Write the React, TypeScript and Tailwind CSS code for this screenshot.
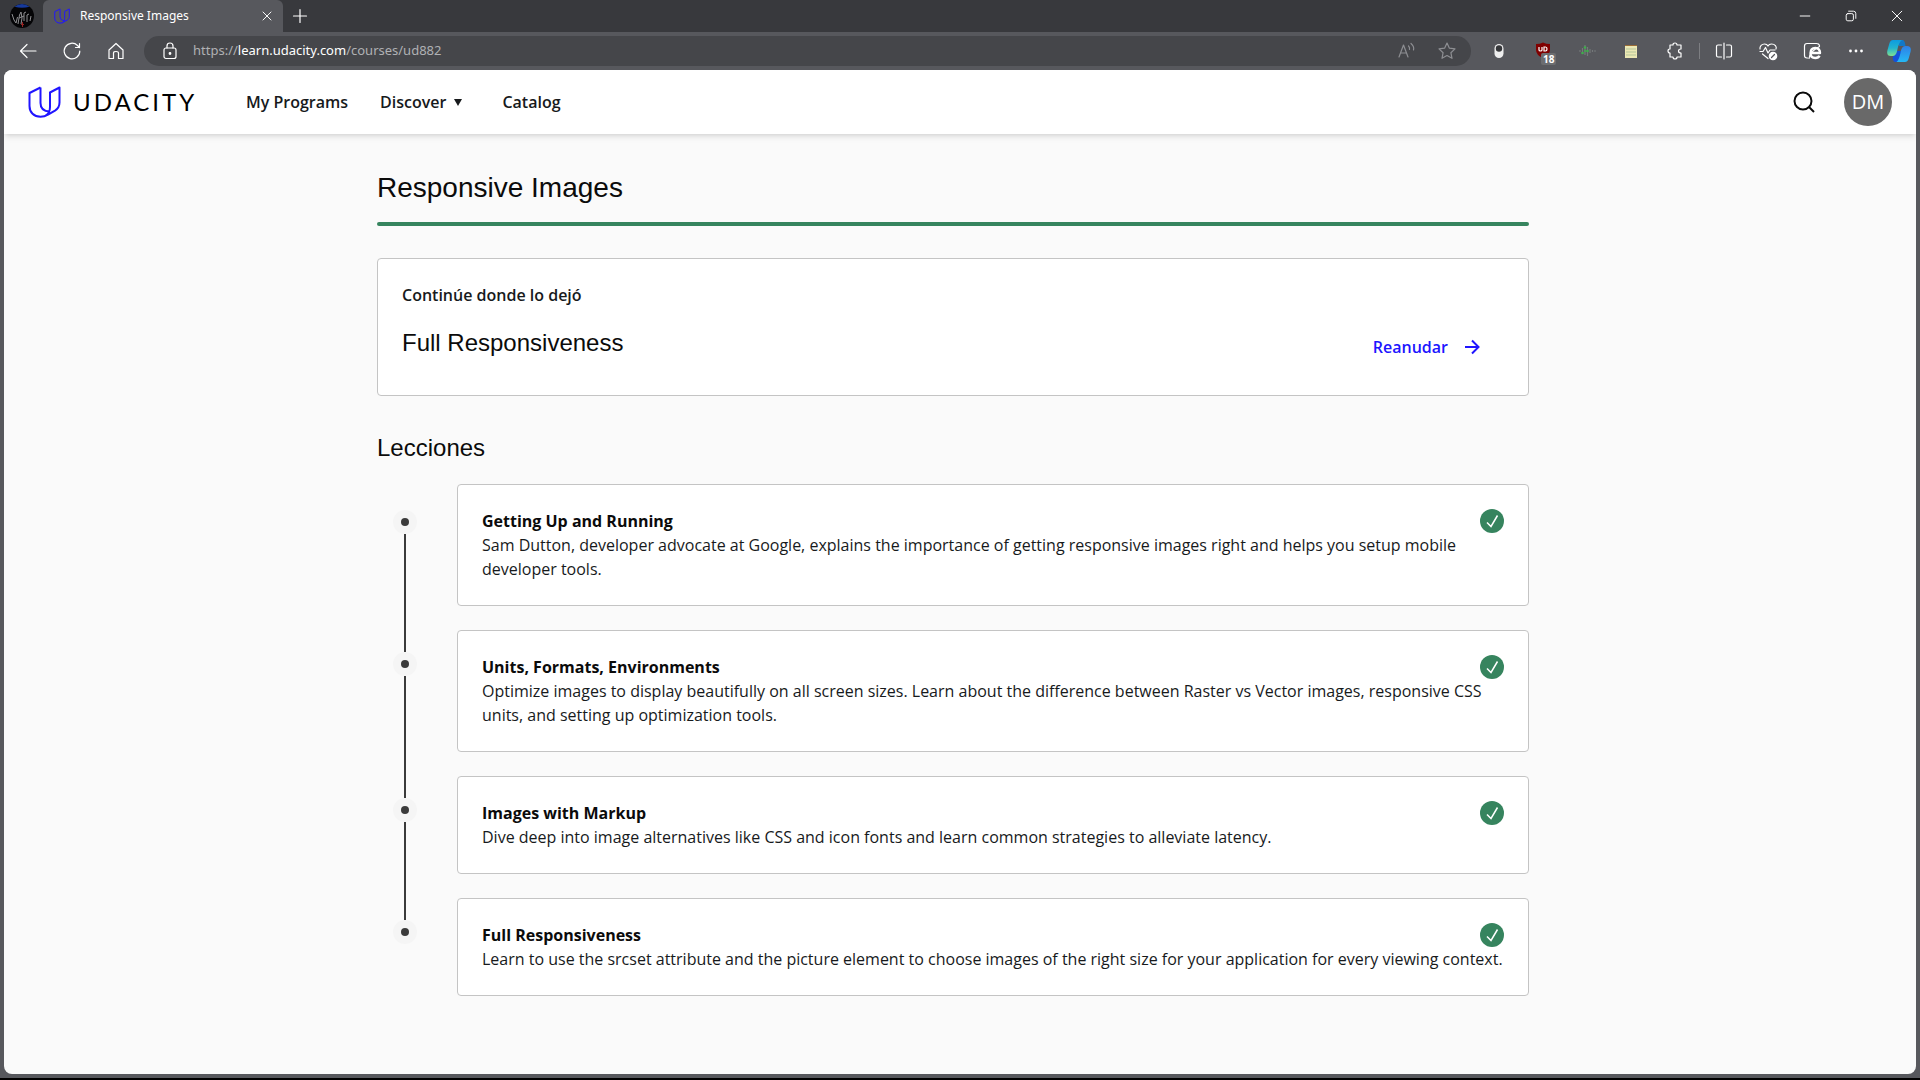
import React from "react";

const lessons = [
  {
    title: "Getting Up and Running",
    text: "Sam Dutton, developer advocate at Google, explains the importance of getting responsive images right and helps you setup mobile developer tools.",
  },
  {
    title: "Units, Formats, Environments",
    text: "Optimize images to display beautifully on all screen sizes. Learn about the difference between Raster vs Vector images, responsive CSS units, and setting up optimization tools.",
  },
  {
    title: "Images with Markup",
    text: "Dive deep into image alternatives like CSS and icon fonts and learn common strategies to alleviate latency.",
  },
  {
    title: "Full Responsiveness",
    text: "Learn to use the srcset attribute and the picture element to choose images of the right size for your application for every viewing context.",
  },
];

function Mark({ className }: { className: string }) {
  return (
    <svg viewBox="0 0 33 32" className={className} fill="none" stroke="#2015ff" strokeWidth="2" strokeLinejoin="round" aria-hidden="true">
      <path d="M12.500 1.500 L1.500 7 V20 C1.500 26.500 6 30.700 12.500 30.700 C15.500 30.700 18 29.800 20 28.600 L27 24.600 C30 22.700 31.500 20 31.500 16.500 V1.500 L22 6.500 V21 C22 25 20.500 28 17.500 29.700" />
      <path d="M12.500 1.500 V17 C12.500 22 15.500 25.300 21.500 25.600" />
    </svg>
  );
}

function IconButton({ label, className, children }: { label: string; className: string; children: React.ReactNode }) {
  return (
    <button type="button" aria-label={label} className={`flex h-7 shrink-0 items-center justify-center ${className}`}>
      {children}
    </button>
  );
}

function Line({ children, className = "size-5" }: { children: React.ReactNode; className?: string }) {
  return (
    <svg viewBox="0 0 20 20" className={className} fill="none" stroke="currentColor" strokeWidth="1.2" strokeLinecap="round" strokeLinejoin="round" aria-hidden="true">
      {children}
    </svg>
  );
}

function TabBar() {
  return (
    <div className="flex h-8 items-stretch bg-[#38393d] text-white">
      <button type="button" aria-label="Profile" className="flex w-[43px] items-center justify-center">
        <svg viewBox="0 0 24 24" className="size-6" aria-hidden="true">
          <circle cx="12" cy="12" r="12" fill="#050507" />
          <path d="M4.500 2.700 A12 12 0 0 1 19.500 2.700 Q12 5 4.500 2.700 Z" fill="#173a9c" />
          <path d="M2 10 L4 16 L6 19 L7.500 13 M8 20 L9.500 11 L11 8 L12 14 L11 20 M14 17 V9 L16 8 M17 18 V11 L19 10 M20 17 L21 12 M9 14 L14 12" stroke="#8f8f92" strokeWidth="1" fill="none" />
          <path d="M12.500 18 V23 M11 20.500 H14" stroke="#9a2424" strokeWidth="1" />
        </svg>
      </button>
      <div className="flex w-60 items-center rounded-t-md bg-[#57585d] pr-2 pl-[11px]">
        <Mark className="size-4" />
        <span className="ml-2.5 flex-1 font-['Noto_Sans',sans-serif] text-[12px]">Responsive Images</span>
        <IconButton label="Close tab" className="w-4">
          <Line className="size-4"><path d="M5 5 L15 15 M15 5 L5 15" /></Line>
        </IconButton>
      </div>
      <IconButton label="New tab" className="mt-0.5 w-[34px]">
        <Line className="size-5"><path d="M10 3.500 V16.500 M3.500 10 H16.500" /></Line>
      </IconButton>
      <div className="ml-auto flex items-center">
        <IconButton label="Minimize" className="w-[46px]"><Line className="size-4"><path d="M4 10 H16" /></Line></IconButton>
        <IconButton label="Restore" className="w-[46px]">
          <Line className="size-4"><rect x="4" y="7" width="9" height="9" rx="2" /><path d="M7 4 H13 Q16 4 16 7 V13" /></Line>
        </IconButton>
        <IconButton label="Close" className="w-[46px]"><Line className="size-4"><path d="M4 4 L16 16 M16 4 L4 16" /></Line></IconButton>
      </div>
    </div>
  );
}

function ToolBar() {
  return (
    <div className="flex h-[38px] items-center text-white">
      <IconButton label="Back" className="ml-[5px] w-[45px]"><Line><path d="M18 10 H2.500 M9 3.500 L2.500 10 L9 16.500" /></Line></IconButton>
      <IconButton label="Refresh" className="w-[44px]"><Line><path d="M17.800 10 A7.800 7.800 0 1 1 15.500 4.500 L17.500 6.500 M17.500 2.500 V6.500 H13.500" /></Line></IconButton>
      <IconButton label="Home" className="w-[44px]"><Line><path d="M3 9 L10 2.500 L17 9 V17.500 H12.500 V12 Q12.500 10.500 10 10.500 Q7.500 10.500 7.500 12 V17.500 H3 Z" /></Line></IconButton>
      <div className="ml-1.5 flex h-[30px] flex-1 items-center rounded-full bg-[#45464a] pr-1 pl-4">
        <Line><rect x="4" y="7" width="12" height="10.500" rx="2" /><path d="M7 7 V5 Q7 2 10 2 Q13 2 13 5 V7" /><circle cx="10" cy="12.500" r="0.800" fill="currentColor" /></Line>
        <a href="https://learn.udacity.com/courses/ud882" className="ml-[13px] flex-1 font-['Noto_Sans',sans-serif] text-[13px] text-[#b0b1b4]">
          https://<span className="text-white">learn.udacity.com</span>/courses/ud882
        </a>
        <IconButton label="Read aloud" className="w-10 text-[#8d8e92]"><Line><path d="M2 16 L6.500 4 L11 16 M3.500 12 H9.500 M11.500 5 Q13 6.500 12.500 8.500 M14 2.500 Q17.500 5.500 16.500 9" /></Line></IconButton>
        <IconButton label="Favorite" className="w-10 text-[#8d8e92]"><Line><path d="M10 2 L12.400 7.200 L18 7.900 L13.900 11.700 L15 17.300 L10 14.500 L5 17.300 L6.100 11.700 L2 7.900 L7.600 7.200 Z" /></Line></IconButton>
      </div>
      <IconButton label="Toggle extension" className="ml-1.5 w-[44px]">
        <svg viewBox="0 0 20 20" className="size-5" aria-hidden="true"><rect x="5.500" y="3" width="9" height="14" rx="4.500" fill="#eee" /><circle cx="10" cy="7.500" r="3.200" fill="#37383b" /></svg>
      </IconButton>
      <IconButton label="Ad blocker" className="relative w-[44px]">
        <svg viewBox="0 0 20 20" className="size-5" aria-hidden="true"><path d="M10 1.500 Q13 3 17 3 V9 Q17 14 10 17 Q3 14 3 9 V3 Q7 3 10 1.500" fill="#800000" /><path d="M6 6 V9 Q6 10 7.500 10 Q9 10 9 9 V6 M11 10 V6 H12.500 Q14 6 14 8 Q14 10 12.500 10 Z" fill="none" stroke="#fff" strokeWidth="1.200" /></svg>
        <span className="absolute top-4 left-5 rounded-xs bg-[#6c6d70] px-0.5 font-['Noto_Sans',sans-serif] text-[10px] leading-3 font-bold">18</span>
      </IconButton>
      <IconButton label="Audio extension" className="w-[44px]">
        <svg viewBox="0 0 20 20" className="size-5" fill="none" strokeWidth="1.200" aria-hidden="true"><path d="M3 9 V11 M5.500 7 V13 M8 4 V14 M10.500 6 V15 M13 8 V12 M15.500 9 V11 M17 10 H19" stroke="#74787a" /><g fill="#3fae4c"><circle cx="5.500" cy="12" r="1.300" /><circle cx="8" cy="6.500" r="1.300" /><circle cx="10.500" cy="10" r="1.300" /><circle cx="8" cy="10" r="1" /></g></svg>
      </IconButton>
      <IconButton label="Notes" className="w-[44px]">
        <svg viewBox="0 0 20 20" className="size-5" aria-hidden="true"><rect x="4" y="4" width="12" height="13" fill="#ece8b4" /><path d="M4 4.500 H16" stroke="#9b6c38" /><path d="M5 8 H15 M5 11 H15 M5 14 H15" stroke="#b4c59a" /></svg>
      </IconButton>
      <IconButton label="Extensions" className="w-[44px]"><Line><path d="M5 4 H8 Q8 2 10 2 Q12 2 12 4 H16 V8 Q13.500 8 13.500 10 Q13.500 12 16 12 V16 H12 Q12 18 10 18 Q8 18 8 16 H5 V12 Q3 12 3 10 Q3 8 5 8 Z" /></Line></IconButton>
      <span className="mx-0.5 h-4 w-px bg-[#7d7e82]" />
      <IconButton label="Split screen" className="w-[44px]"><Line><path d="M7.500 4 H4 Q2.500 4 2.500 5.500 V14.500 Q2.500 16 4 16 H7.500 M12.500 4 H16 Q17.500 4 17.500 5.500 V14.500 Q17.500 16 16 16 H12.500 M10 2 V18" /></Line></IconButton>
      <IconButton label="Browser essentials" className="w-[44px]">
        <Line><path d="M2 8 C1.500 5 4 3 6.500 3 Q9 3 10 5 Q11 3 13.500 3 C17 3 19 5.500 18 8 M2 10.500 H5 L7.500 6.500 L10 12 L12 9 H17 M4.500 13 L10 17.500" /><circle cx="15" cy="15" r="3.700" fill="#fff" /><path d="M13.500 16.500 L16.500 13.500" stroke="#57585d" /></Line>
      </IconButton>
      <IconButton label="Internet Explorer mode" className="w-[44px]">
        <Line><path d="M5.500 17 H5 Q2.500 17 2.500 14.500 V5 Q2.500 2.500 5 2.500 H14.500 Q17 2.500 17.500 4.500" /><path d="M8.500 12 H18 Q18 7 13.300 7 Q8.500 7 8.500 12.300 Q8.500 17 13.300 17 Q16.500 17 17.500 14.800" strokeWidth="2.400" strokeLinecap="butt" /><path d="M7 17.500 Q7.500 11 17.500 5.500" /></Line>
      </IconButton>
      <IconButton label="More" className="w-[44px]">
        <svg viewBox="0 0 20 20" className="size-5" fill="currentColor" aria-hidden="true"><circle cx="4.500" cy="10" r="1.400" /><circle cx="10" cy="10" r="1.400" /><circle cx="15.500" cy="10" r="1.400" /></svg>
      </IconButton>
      <IconButton label="Copilot" className="w-[42px]">
        <svg viewBox="0 0 24 24" className="size-6" aria-hidden="true">
          <defs>
            <linearGradient id="cl" x1="0" y1="0" x2="0" y2="1"><stop offset="0" stopColor="#0d9be0" /><stop offset="0.5" stopColor="#22b3cf" /><stop offset="1" stopColor="#7fe08f" /></linearGradient>
            <linearGradient id="cr" x1="0" y1="0" x2="0" y2="1"><stop offset="0" stopColor="#2f7fe6" /><stop offset="1" stopColor="#25b9f5" /></linearGradient>
          </defs>
          <path d="M6 17 Q5 22 8 23 H13 L16 12 H8 Z" fill="#1450d8" />
          <path d="M11 1 H16 Q18 2 18.500 7 H12 Z" fill="#1178c8" />
          <path d="M18 23 H9.500 Q12 21 13.500 14 Q14.500 7 18 7 H20 Q25 7 23.500 13 L21.500 20 Q20.500 23 18 23" fill="url(#cr)" />
          <path d="M6 1 H15 Q12 3 10.500 10 Q9.500 17 6 17 H4 Q-1 17 0.500 11 L2.500 4 Q3.500 1 6 1" fill="url(#cl)" />
        </svg>
      </IconButton>
    </div>
  );
}

function SiteHeader() {
  return (
    <header className="z-10 flex h-16 shrink-0 items-center bg-white px-6 font-semibold text-[#171a1c] shadow-md">
      <a href="#home" aria-label="Udacity" className="flex w-[170px] items-center text-black">
        <Mark className="h-8 w-[33px]" />
        <span className="ml-3 font-[Lato,sans-serif] text-[24px] leading-8 font-normal tracking-[3px]">UDACITY</span>
      </a>
      <nav className="ml-12 flex items-center gap-8">
        <a href="#programs">My Programs</a>
        <button type="button" className="mr-2 flex items-center gap-2">
          Discover
          <svg viewBox="0 0 8 7" className="h-[7px] w-2" aria-hidden="true"><path d="M0 0 H8 L4 7 Z" fill="currentColor" /></svg>
        </button>
        <a href="#catalog">Catalog</a>
      </nav>
      <button type="button" aria-label="Search" className="mr-6 ml-auto flex size-8 items-center justify-center">
        <svg viewBox="0 0 24 24" className="size-6" fill="none" stroke="#0b0b0b" strokeWidth="2" aria-hidden="true"><circle cx="11" cy="11" r="8.500" /><path d="M17 17 L22 22" /></svg>
      </button>
      <button type="button" className="flex size-12 items-center justify-center rounded-full bg-[#696969] text-[20px] font-medium text-white">DM</button>
    </header>
  );
}

function Lesson({ title, text, first, last }: { title: string; text: string; first: boolean; last: boolean }) {
  return (
    <li className="flex">
      <div className="flex w-20 shrink-0 flex-col pl-4" aria-hidden="true">
        <div className="flex w-6 flex-1 flex-col items-center">
          <span className={first ? "h-[26px] w-0.5" : "h-[22px] w-0.5 bg-[#3b3b3b]"} />
          <span className="flex size-6 items-center justify-center rounded-full bg-[#f5f5f5]">
            <span className="size-2 rounded-full bg-[#3b3b3b]" />
          </span>
          {!last && <span className="w-0.5 flex-1 bg-[#3b3b3b]" />}
        </div>
      </div>
      <div className={last ? "flex-1" : "flex-1 pb-6"}>
        <a href="#lesson" className="relative block rounded-sm border border-[#c4c4c4] bg-white p-6">
          <h3 className="font-bold text-[#0b0b0b]">{title}</h3>
          <p>{text}</p>
          <svg viewBox="0 0 24 24" className="absolute top-6 right-6 size-6" aria-hidden="true">
            <circle cx="12" cy="12" r="12" fill="#36845e" />
            <path d="M7 13.500 L11 17.500 L17.500 6.500" fill="none" stroke="#fff" strokeWidth="1.500" />
          </svg>
        </a>
      </div>
    </li>
  );
}

export default function App() {
  return (
    <div className="flex min-h-screen flex-col border-b-2 border-black bg-[#57585d]">
      <TabBar />
      <ToolBar />
      <div className="mx-1 mb-1 flex flex-1 flex-col overflow-hidden rounded-lg bg-[#fafafa] font-['Open_Sans',sans-serif] text-[16px] leading-6 text-[#171a1c]">
        <SiteHeader />
        <div className="pr-3.5">
          <main className="mx-auto max-w-6xl pt-[34px]">
            <h1 className="font-['Liberation_Sans',sans-serif] text-[28px] leading-10 text-[#0b0b0b]">Responsive Images</h1>
            <div className="mt-3.5 h-1 rounded-full bg-[#36845e]" />
            <section className="mt-8 flex items-end justify-between rounded-sm border border-[#c4c4c4] bg-white p-6">
              <div>
                <p className="font-semibold">Continúe donde lo dejó</p>
                <h2 className="mt-5 mb-3 font-['Liberation_Sans',sans-serif] text-[24px] leading-8 text-[#0b0b0b]">Full Responsiveness</h2>
              </div>
              <a href="#resume" className="mr-5 mb-3 flex items-center gap-3 font-semibold text-[#2015ff]">
                Reanudar
                <svg viewBox="0 0 24 24" className="size-6" fill="none" stroke="currentColor" strokeWidth="2" aria-hidden="true"><path d="M5 12 H18 M12 5.500 L18.500 12 L12 18.500" /></svg>
              </a>
            </section>
            <h2 className="mt-9 font-['Liberation_Sans',sans-serif] text-[24px] leading-8 text-[#0b0b0b]">Lecciones</h2>
            <ul className="mt-5">
              {lessons.map((l, i) => (
                <Lesson key={l.title} title={l.title} text={l.text} first={i === 0} last={i === lessons.length - 1} />
              ))}
            </ul>
          </main>
        </div>
      </div>
    </div>
  );
}
